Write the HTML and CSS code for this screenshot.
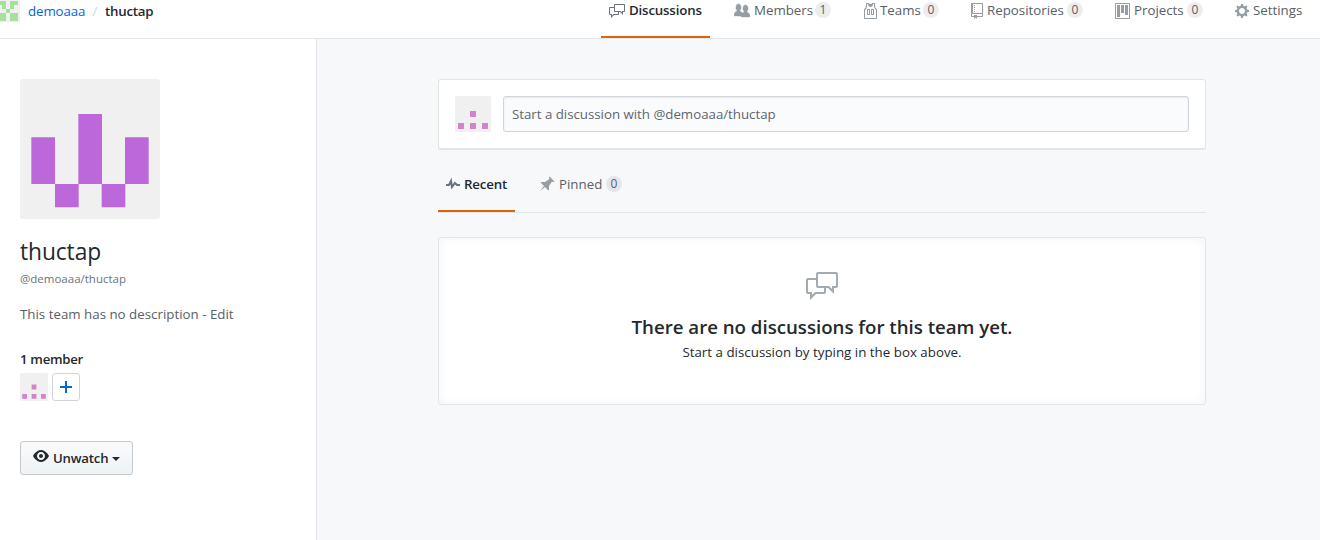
FILE: index.html
```html
<!DOCTYPE html>
<html lang="en">
<head>
<meta charset="utf-8">
<title>thuctap team</title>
<link rel="stylesheet" href="styles.css">
</head>
<body>
<header class="top">
  <div class="crumbs">
    <svg class="crumb-avatar" width="20" height="22" viewBox="0 0 20 22"><path fill="#f0f0f0" d="M0 0h20v22H0z"/><path fill="#a7e09b" d="M0 1h6v4H0zM10 1h8v4h-8zM2 5h4v4H2zM6 5h4v0H6zM10 5h4v4h-4zM6 9h4v4H6zM0 13h6v4H0zM10 13h8v4h-8zM0 17h6v4H0zM10 17h8v4h-8z"/></svg>
    <a class="org">demoaaa</a><span class="slash">/</span><strong class="team">thuctap</strong>
  </div>
  <nav class="nav">
    <a class="tab selected"><svg class="icon" width="16" height="16" viewBox="0 0 16 16"><path d="M15 1H6c-.55 0-1 .45-1 1v2H1c-.55 0-1 .45-1 1v6c0 .55.45 1 1 1h1v3l3-3h4c.55 0 1-.45 1-1V9h1l3 3V9h1c.55 0 1-.45 1-1V2c0-.55-.45-1-1-1zM9 11H4.5L3 12.5V11H1V5h4v3c0 .55.45 1 1 1h3v2zm6-3h-2v1.5L11.5 8H6V2h9v6z"/></svg><span>Discussions</span></a>
    <a class="tab"><svg class="icon people" width="16" height="16" viewBox="0 0 16 16"><path d="M16 12.999c0 .439-.45 1-1 1H7.995c-.539 0-.994-.447-.995-.999H1c-.54 0-1-.561-1-1 0-2.634 3-4 3-4s.229-.409 0-1c-.841-.621-1.058-.59-1-3 .058-2.419 1.367-3 2.5-3s2.442.58 2.5 3c.058 2.41-.159 2.379-1 3-.229.59 0 1 0 1s1.549.711 2.42 2.088A6.78 6.78 0 0 1 10 8.999s.229-.409 0-1c-.841-.621-1.058-.59-1-3 .058-2.419 1.367-3 2.5-3s2.437.581 2.495 3c.059 2.41-.158 2.38-1 3-.229.59 0 1 0 1s3.005 1.366 3.005 4"/></svg><span>Members</span><b class="count">1</b></a>
    <a class="tab tight"><svg class="icon" width="14" height="16" viewBox="0 0 14 16"><path fill-rule="evenodd" d="M4.5 6l-.5.5v5l.5.5h2l.5-.5v-5L6.5 6h-2zM6 11H5V7h1v4zm6.27-7.25C12.05 2.37 11.96 1.12 12 0H9.02c0 .27-.13.48-.39.69-.25.2-.63.3-1.13.3-.5 0-.88-.09-1.13-.3-.23-.2-.36-.42-.37-.69H3c.05 1.13-.03 2.38-.25 3.75C2.55 5.13 1.95 5.88 1 6v9c.02.27.13.48.34.66.21.18.42.32.66.34h11c.23-.02.45-.14.66-.34.2-.2.32-.42.34-.66V6c-.95-.13-1.53-.88-1.75-2.25h.02zM13 15H2V7c.89-.5 1.48-1.25 1.72-2.25S4.03 2.5 4 1h1c-.02.78.16 1.47.52 2.06.36.58 1.02.89 2 .94.98-.02 1.64-.33 2-.94.36-.59.5-1.28.48-2.06h1c.02 1.42.13 2.55.33 3.38.2.81.69 1.7 1.67 2.63v8V15zM8.5 6l-.5.5v5l.5.5h2l.5-.5v-5l-.5-.5h-2zm1.5 5H9V7h1v4z"/></svg><span>Teams</span><b class="count">0</b></a>
    <a class="tab"><svg class="icon" width="12" height="16" viewBox="0 0 12 16"><path fill-rule="evenodd" d="M4 9H3V8h1v1zm0-3H3v1h1V6zm0-2H3v1h1V4zm0-2H3v1h1V2zm8-1v12c0 .55-.45 1-1 1H6v2l-1.5-1.5L3 16v-2H1c-.55 0-1-.45-1-1V1c0-.55.45-1 1-1h10c.55 0 1 .45 1 1zm-1 10H1v2h2v-1h3v1h5v-2zm0-10H2v9h9V1z"/></svg><span>Repositories</span><b class="count">0</b></a>
    <a class="tab"><svg class="icon" width="15" height="16" viewBox="0 0 15 16"><path fill-rule="evenodd" d="M10 12h3V2h-3v10zm-4-2h3V2H6v8zm-4 4h3V2H2v12zm-1 1h13V1H1v14zM14 0H1a1 1 0 0 0-1 1v14a1 1 0 0 0 1 1h13a1 1 0 0 0 1-1V1a1 1 0 0 0-1-1z"/></svg><span>Projects</span><b class="count">0</b></a>
    <a class="tab"><svg class="icon" width="14" height="16" viewBox="0 0 14 16"><path d="M14 8.77v-1.6l-1.94-.64-.45-1.09.88-1.84-1.13-1.13-1.81.91-1.09-.45-.69-1.92h-1.6l-.63 1.94-1.11.45-1.84-.88-1.13 1.13.91 1.81-.45 1.09L0 7.23v1.59l1.94.64.45 1.09-.88 1.84 1.13 1.13 1.81-.91 1.09.45.69 1.92h1.59l.63-1.94 1.11-.45 1.84.88 1.13-1.13-.92-1.81.47-1.09L14 8.75v.02zM7 11c-1.66 0-3-1.34-3-3s1.34-3 3-3 3 1.34 3 3-1.34 3-3 3z"/></svg><span>Settings</span></a>
  </nav>
</header>
<div class="layout">
  <aside class="side">
    <svg class="team-avatar" width="140" height="140" viewBox="0 0 420 420"><path fill="#f0f0f0" d="M0 0h420v420H0z"/><path fill="#bc67da" d="M34 175h71v140H34zM175 105h71v210h-71zM315 175h71v140h-71zM105 315h71v70h-71zM245 315h71v70h-71z"/></svg>
    <h1 class="name">thuctap</h1>
    <p class="handle">@demoaaa/thuctap</p>
    <p class="desc">This team has no description - Edit</p>
    <h2 class="members-title">1 member</h2>
    <div class="members">
      <svg class="user-avatar" width="28" height="28" viewBox="0 0 28 28"><path fill="#f0f0f0" d="M0 0h28v28H0z"/><path fill="#d283c9" d="M11.6 11.6h4.8v4.8h-4.8zM2.2 21h4.8v4.8H2.2zM11.6 21h4.8v4.8h-4.8zM21 21h4.8v4.8H21z"/></svg>
      <button class="add"><svg width="12" height="16" viewBox="0 0 12 16"><path d="M12 9H7v5H5V9H0V7h5V2h2v5h5z"/></svg></button>
    </div>
    <button class="watch"><svg class="eye" width="16" height="16" viewBox="0 0 16 16"><path d="M8.06 2C3 2 0 8 0 8s3 6 8.06 6C13 14 16 8 16 8s-3-6-7.94-6zM8 12c-2.2 0-4-1.78-4-4 0-2.2 1.8-4 4-4 2.22 0 4 1.8 4 4 0 2.22-1.78 4-4 4zm2-4c0 1.11-.89 2-2 2-1.11 0-2-.89-2-2 0-1.11.89-2 2-2 1.11 0 2 .89 2 2z"/></svg><span>Unwatch</span><i class="caret"></i></button>
  </aside>
  <main class="main">
    <section class="composer">
      <svg class="user-avatar" width="36" height="36" viewBox="0 0 36 36"><path fill="#f0f0f0" d="M0 0h36v36H0z"/><path fill="#d283c9" d="M15 15h6v6h-6zM3 27h6v6H3zM15 27h6v6h-6zM27 27h6v6h-6z"/></svg>
      <div class="input">Start a discussion with @demoaaa/thuctap</div>
    </section>
    <div class="filters">
      <a class="filter selected"><svg class="icon" width="14" height="16" viewBox="0 0 14 16"><path d="M11.5 8L8.8 5.4 6.6 8.5 5.5 1.6 2.38 8H0v2h3.6l.9-1.8.9 5.4L9 8.5l1.6 1.5H14V8h-2.5z"/></svg><span>Recent</span></a>
      <a class="filter"><svg class="icon" width="16" height="16" viewBox="0 0 16 16"><path d="M10 1.2V2l.5 1L6 6H2.2c-.44 0-.67.53-.34.86L5 10l-4 5 5-4 3.14 3.14a.5.5 0 0 0 .86-.34V10l3-4.5 1 .5h.8c.44 0 .67-.53.34-.86L10.86.86a.5.5 0 0 0-.86.34z"/></svg><span>Pinned</span><b class="count">0</b></a>
    </div>
    <section class="blank">
      <svg class="blank-icon" width="32" height="32" viewBox="0 0 16 16"><path d="M15 1H6c-.55 0-1 .45-1 1v2H1c-.55 0-1 .45-1 1v6c0 .55.45 1 1 1h1v3l3-3h4c.55 0 1-.45 1-1V9h1l3 3V9h1c.55 0 1-.45 1-1V2c0-.55-.45-1-1-1zM9 11H4.5L3 12.5V11H1V5h4v3c0 .55.45 1 1 1h3v2zm6-3h-2v1.5L11.5 8H6V2h9v6z"/></svg>
      <h3 class="blank-title">There are no discussions for this team yet.</h3>
      <p class="blank-text">Start a discussion by typing in the box above.</p>
    </section>
  </main>
</div>
</body>
</html>
```
FILE: styles.css
```css
* { box-sizing: border-box; }
body {
  margin: 0;
  height: 540px;
  overflow: hidden;
  display: flex;
  flex-direction: column;
  background: #fff;
  color: #24292e;
  font: 13.3px/20px "Open Sans", "Noto Sans", sans-serif;
}
h1, h2, h3, p { margin: 0; }
svg { display: block; flex: none; fill: currentColor; }
span, strong, h1, h2, h3, p { white-space: nowrap; }

.top {
  height: 39px;
  flex: none;
  display: flex;
  justify-content: space-between;
  border-bottom: 1px solid #e1e4e8;
}
.crumbs { display: flex; height: 22px; line-height: 22px; }
.crumb-avatar { width: 20px; }
.org { color: #0366d6; margin-left: 8px; width: 57px; letter-spacing: -.1px; }
.slash { color: #d1d5da; width: 20px; text-align: center; }
.team { font-weight: 600; letter-spacing: -.25px; }

.nav {
  display: grid;
  grid-template-columns: 109px 113px 92px 128px 104px 93px;
  column-gap: 16px;
}
.tab {
  height: 38px;
  display: flex;
  align-items: flex-start;
  padding: 0 8px;
  color: #586069;
}
.tab span { margin-left: 4px; }
.tab.tight span { margin-left: 3px; }
.tab .icon { margin-top: 3px; color: #959da5; }
.tab .people { stroke: currentColor; stroke-width: .4px; }
.tab .count { margin-top: 2px; }
.tab.selected, .filter.selected {
  color: #24292e;
  font-weight: 600;
  letter-spacing: -.18px;
  border-bottom: 2px solid #e36209;
}
.tab.selected .icon, .filter.selected .icon { color: #6a737d; }
.count {
  margin-left: auto;
  min-width: 16px;
  height: 16px;
  border-radius: 10px;
  background: rgba(27, 31, 35, .08);
  color: #586069;
  font-size: 12px;
  font-weight: 500;
  line-height: 16px;
  text-align: center;
}

.layout { flex: 1; display: flex; }
.side {
  width: 317px;
  padding: 40px 20px 0;
  border-right: 1px solid #e1e4e8;
}
.team-avatar { border-radius: 3px; }
.name {
  margin-top: 17px;
  font-size: 22.8px;
  font-weight: 400;
  line-height: 32px;
  letter-spacing: -.1px;
}
.handle { margin-top: 2px; font-size: 11.5px; line-height: 18px; color: #6a737d; }
.desc { margin-top: 16px; color: #586069; letter-spacing: .01px; }
.members-title { margin-top: 25px; font-size: 13.2px; font-weight: 600; letter-spacing: -.3px; }
.members { display: flex; gap: 4px; margin-top: 4px; }
.user-avatar { border-radius: 2px; }
.add {
  width: 28px;
  height: 28px;
  padding: 0;
  display: grid;
  place-items: center;
  border: 1px solid #d1d5da;
  border-radius: 3px;
  background: #fff;
  color: #0366d6;
}
.watch {
  margin-top: 40px;
  width: 113px;
  height: 34px;
  padding: 0 12px;
  display: flex;
  align-items: center;
  border: 1px solid #c5c9cd;
  border-radius: 3px;
  background: linear-gradient(#fafbfc, #eff3f6 90%);
  color: #24292e;
  font: 600 13.2px/20px "Open Sans", "Noto Sans", sans-serif;
  letter-spacing: -.2px;
}
.eye { margin: 0 4px 4px 0; }
.caret {
  margin: 2px 0 0 auto;
  border: 4px solid transparent;
  border-top-color: currentColor;
  border-bottom: 0;
}

.main { flex: 1; padding: 40px 114px 0 121px; background: #f6f8fa; }
.composer {
  height: 71px;
  padding: 16px;
  display: flex;
  gap: 12px;
  background: #fff;
  border: 1px solid #e1e4e8;
  border-bottom-width: 2px;
  border-radius: 3px;
}
.input {
  flex: 1;
  height: 36px;
  padding: 0 8px;
  line-height: 34px;
  border: 1px solid #d1d5da;
  border-radius: 3px;
  background: #fafbfc;
  box-shadow: inset 0 1px 2px rgba(27, 31, 35, .075);
  color: #5f666e;
  letter-spacing: -.02px;
}
.filters {
  display: grid;
  grid-template-columns: 77px 99px;
  column-gap: 16px;
  height: 57px;
  margin-top: 6px;
  border-bottom: 1px solid #e1e4e8;
}
.filter {
  height: 56px;
  display: flex;
  align-items: flex-start;
  padding: 18px 8px 0;
  color: #586069;
}
.filter span { margin-left: 4px; }
.filter .icon { margin-top: 2px; color: #959da5; }
.filter .count { margin-top: 2px; }
.blank {
  margin-top: 24px;
  height: 168px;
  padding-top: 32px;
  display: flex;
  flex-direction: column;
  align-items: center;
  background: #fff;
  border: 1px solid #e1e4e8;
  border-radius: 3px;
  box-shadow: inset 0 0 10px rgba(27, 31, 35, .05);
}
.blank-icon { color: #a3aab1; }
.blank-title { margin-top: 10px; font-size: 18.7px; font-weight: 600; line-height: 30px; letter-spacing: -.02px; }
.blank-text { line-height: 20px; letter-spacing: .02px; }
```
